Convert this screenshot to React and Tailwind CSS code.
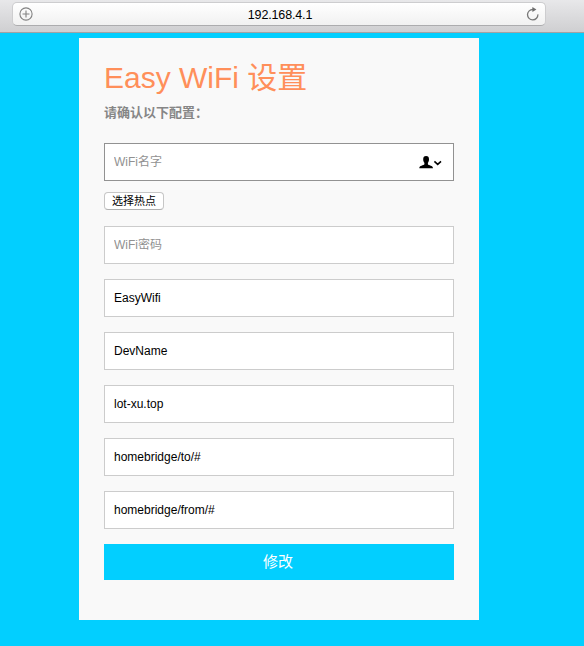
const fields = ['EasyWifi', 'DevName', 'lot-xu.top', 'homebridge/to/#', 'homebridge/from/#'];

const inputBase =
  "block h-[38px] w-full border bg-white px-[9px] pb-px text-[12px] text-black outline-none placeholder:text-[#919191] placeholder:opacity-100";

function Toolbar() {
  return (
    <header className="h-[33px] border-b border-[#a2a2a4] bg-linear-to-b from-[#e8e8ea] to-[#cfcfd1] pt-[2px] pr-[38px] pl-[12px]">
      <div className="flex h-[24px] items-center justify-between rounded-[5px] border border-[#cdcdcf] border-b-[#acacae] bg-linear-to-b from-white to-[#f1f1f1] pr-[5px] pl-[6px]">
        <svg width="14" height="14" viewBox="0 0 14 14" fill="none" stroke="#828282">
          <circle cx="7" cy="7" r="6.1" strokeWidth="1.1" />
          <path d="M3.5 7h7M7 3.5v7" strokeWidth="1.1" />
        </svg>
        <span className="pl-px pt-px text-[12.5px] leading-[14px] tracking-[-0.15px] text-black">192.168.4.1</span>
        <svg width="14" height="14" viewBox="0 0 14 14" fill="none">
          <path d="M7 2.500A5.200 5.200 0 1 0 11.900 7.400" stroke="#777" strokeWidth="1.300" />
          <path d="M6.400 0v5l4-2.400z" fill="#6d6d6d" />
        </svg>
      </div>
    </header>
  );
}

export default function App() {
  return (
    <div className="min-h-[646px] bg-[#02cfff] font-['Liberation_Sans','Noto_Sans_CJK_SC',sans-serif]">
      <Toolbar />
      <main className="mt-[5px] ml-[79px] h-[582px] w-[400px] bg-[#f9f9f9] px-[25px] pt-[20px]">
        <h1 className="h-[40px] text-[30px] leading-[40px] whitespace-nowrap text-[#ff8f5a]">Easy WiFi 设置</h1>
        <h2 className="mt-[6px] h-[18px] text-[13px] leading-[18px] font-bold whitespace-nowrap text-[#868686]">
          请确认以下配置：
        </h2>
        <div className="mt-[21px] flex h-[38px] items-center border border-[#929292] bg-white pr-[11px] pl-[9px]">
          <input
            placeholder="WiFi名字"
            className="min-w-0 flex-1 pb-px text-[12px] outline-none placeholder:text-[#919191] placeholder:opacity-100"
          />
          <svg width="23" height="13" viewBox="0 0 23 13">
            <path d="M7.100 0c2 0 2.900 1 2.900 3.200 0 1.700-.5 2.700-1.100 3.600v1.500c.7 1.300 5.100 1.100 5.100 3.900H.3c0-2.800 4.400-2.600 5.100-3.900V6.800C4.700 5.900 4.200 4.900 4.200 3.200 4.200 1 5.100 0 7.100 0z" fill="#000" />
            <path d="M15.400 5.300l3.300 3 3.300-3" fill="none" stroke="#000" strokeWidth="1.600" />
          </svg>
        </div>
        <button className="mt-[11px] flex h-[18px] w-[60px] items-center justify-center rounded-[4px] border border-[#c6c6c6] border-b-[#b0b0b0] bg-white text-[11px] leading-[16px] whitespace-nowrap text-black">
          选择热点
        </button>
        <div className="mt-[16px] flex flex-col gap-[15px]">
          <input placeholder="WiFi密码" className={`${inputBase} border-[#cccccc]`} />
          {fields.map((value) => (
            <input key={value} defaultValue={value} className={`${inputBase} border-[#cccccc]`} />
          ))}
          <button className="h-[36px] w-full bg-[#02cfff] pr-[2px] text-[15px] leading-[36px] text-white">修改</button>
        </div>
      </main>
    </div>
  );
}
